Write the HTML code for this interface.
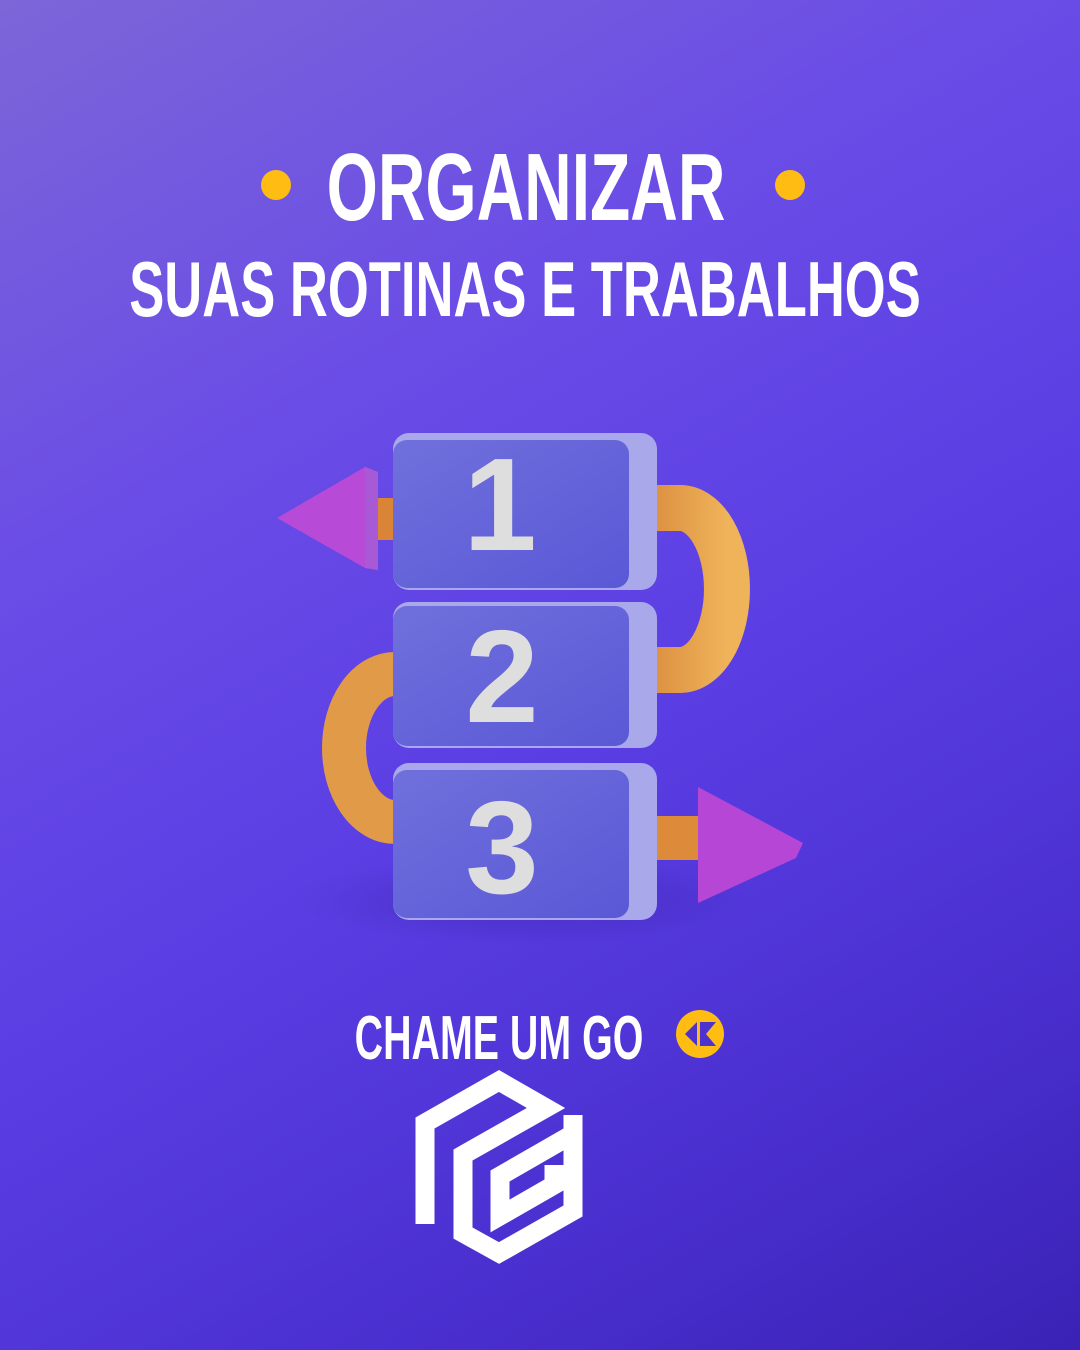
<!DOCTYPE html>
<html><head><meta charset="utf-8"><style>
html,body{margin:0;padding:0}
body{width:1080px;height:1350px;overflow:hidden;position:relative;
background:linear-gradient(150deg,#7c66d8 0%,#6a4ce6 30%,#5a3ee4 55%,#4a2fcf 80%,#3a22b5 100%);
font-family:"Liberation Sans",sans-serif}
.t{position:absolute;color:#fff;font-weight:bold;white-space:nowrap}
.dot{position:absolute;width:30px;height:30px;border-radius:50%;background:#ffbd13}
</style></head><body>
<div class="dot" style="left:261px;top:170px"></div>
<div class="dot" style="left:775px;top:170px"></div>
<div class="t" style="left:526px;top:140px;font-size:96px;line-height:96px;transform:translateX(-50%) scaleX(0.686)">ORGANIZAR</div>
<div class="t" style="left:525px;top:250px;font-size:78px;line-height:78px;transform:translateX(-50%) scaleX(0.674)">SUAS ROTINAS E TRABALHOS</div>

<svg width="1080" height="1350" style="position:absolute;left:0;top:0">
<defs>
<linearGradient id="or" x1="0" y1="0" x2="1" y2="0"><stop offset="0" stop-color="#d98a3c"/><stop offset="1" stop-color="#efb35a"/></linearGradient>
<linearGradient id="fr" x1="0" y1="0" x2="1" y2="1"><stop offset="0" stop-color="#7070dc"/><stop offset="1" stop-color="#5a58d6"/></linearGradient>
<radialGradient id="sh" cx="0.5" cy="0.5" r="0.5"><stop offset="0" stop-color="#3a20a0" stop-opacity="0.45"/><stop offset="1" stop-color="#3a20a0" stop-opacity="0"/></radialGradient>
</defs>
<ellipse cx="520" cy="900" rx="230" ry="45" fill="url(#sh)"/>
<path d="M640 508 H680 A47 81 0 0 1 680 670 H640" fill="none" stroke="url(#or)" stroke-width="46"/>
<path d="M395 674 H395 A51 74 0 0 0 395 822 H395" fill="none" stroke="#e09a48" stroke-width="44"/>
<rect x="355" y="498" width="45" height="42" fill="#d98436"/>
<rect x="630" y="816" width="75" height="44" fill="#dd8a3a"/>
<polygon points="277,518 365,467 378,472 378,570 365,568" fill="#b84ad8"/>
<polygon points="365,467 378,472 378,570 365,568" fill="#a85ad6"/>
<polygon points="698,787 803,843 796,858 698,903" fill="#b646d6"/>
<g>
<rect x="393" y="433" width="264" height="157" rx="16" fill="#a8a8ea"/>
<rect x="393" y="440" width="236" height="148" rx="14" fill="url(#fr)"/>
<rect x="393" y="602" width="264" height="146" rx="16" fill="#a8a8ea"/>
<rect x="393" y="606" width="236" height="140" rx="14" fill="url(#fr)"/>
<rect x="393" y="763" width="264" height="157" rx="16" fill="#a8a8ea"/>
<rect x="393" y="770" width="236" height="148" rx="14" fill="url(#fr)"/>
</g>
<g fill="#dedede" font-family="Liberation Sans,sans-serif" font-weight="bold" font-size="132" text-anchor="middle">
<text x="500" y="550">1</text>
<text x="502" y="722">2</text>
<text x="502" y="893">3</text>
</g>
<circle cx="700" cy="1034" r="24" fill="#ffbd13"/>
<polygon points="685,1034 697,1022 697,1046" fill="#4e32cf"/>
<polygon points="700,1022 716,1022 706,1034 716,1046 700,1046" fill="#4e32cf"/>
<g fill="none" stroke="#fff" stroke-width="19" stroke-linejoin="miter" stroke-miterlimit="10">
<polyline points="425,1224 425,1123 499,1081 546,1108 463,1155 463,1233 499,1253 573,1211 573,1115"/>
<polyline points="573,1134 500,1176 500,1216 554,1185 554,1165"/>
</g>
</svg>
<div class="t" style="left:499px;top:1008px;font-size:62px;line-height:62px;transform:translateX(-50%) scaleX(0.635)">CHAME UM GO</div>
</body></html>
